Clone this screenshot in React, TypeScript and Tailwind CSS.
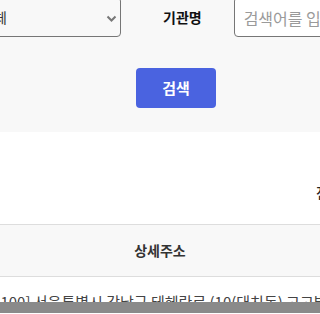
import React from "react";

export default function App() {
  return (
    <div
      className="w-[320px] h-[314px] overflow-hidden bg-white text-[#333]"
      style={{ fontFamily: '"Noto Sans CJK KR", "Noto Sans", sans-serif' }}
    >
      <div className="h-[132px] bg-[#f8f8f8] flex flex-col">
        <div className="flex items-center -mt-[3px] h-[40px] whitespace-nowrap">
          <div className="-ml-[30px] w-[151px] h-[40px] shrink-0 border border-[#767676] rounded-[4px] flex items-center justify-between pl-[10px] pr-[3px] bg-[#f8f8f8]">
            <span className="text-[14px] text-[#333]">전체</span>
            <svg width="11" height="8" viewBox="0 0 11 8" className="mt-[3px]">
              <path d="M1.5 1.5 L5.5 5.5 L9.5 1.5" fill="none" stroke="#777" strokeWidth="2" />
            </svg>
          </div>
          <span className="ml-[42px] text-[14px] font-bold text-[#111] shrink-0">기관명</span>
          <div className="ml-[32px] w-[200px] h-[40px] shrink-0 border border-[#767676] rounded-[4px] bg-white flex items-center pl-[9px]">
            <span className="text-[16px] text-[#9a9a9a] mt-[2px]">검색어를 입력하세요</span>
          </div>
        </div>
        <div className="mt-[31px] pl-[136px]">
          <button className="w-[80px] h-[40px] rounded-[4px] bg-[#4a63e0] text-white text-[15px] font-bold flex items-center justify-center">
            검색
          </button>
        </div>
      </div>
      <div className="h-[92px] flex items-center pl-[316px] whitespace-nowrap overflow-hidden">
        <span className="text-[14px] font-medium text-[#222] mt-[28px]">전체 10건</span>
      </div>
      <div className="h-[53px] border-y border-[#dddddd] bg-[#f8f8f8] flex items-center justify-center">
        <span className="text-[14px] font-bold text-[#333]">상세주소</span>
      </div>
      <div className="h-[25px] overflow-hidden flex justify-center whitespace-nowrap pt-[15px]">
        <span className="text-[15px] leading-[20px] text-[#444] shrink-0">
          [06100] 서울특별시 강남구 테헤란로 (10(대치동) 고고빌딩
        </span>
      </div>
      <div className="h-[11px] bg-[#8a8a8a]" />
    </div>
  );
}
